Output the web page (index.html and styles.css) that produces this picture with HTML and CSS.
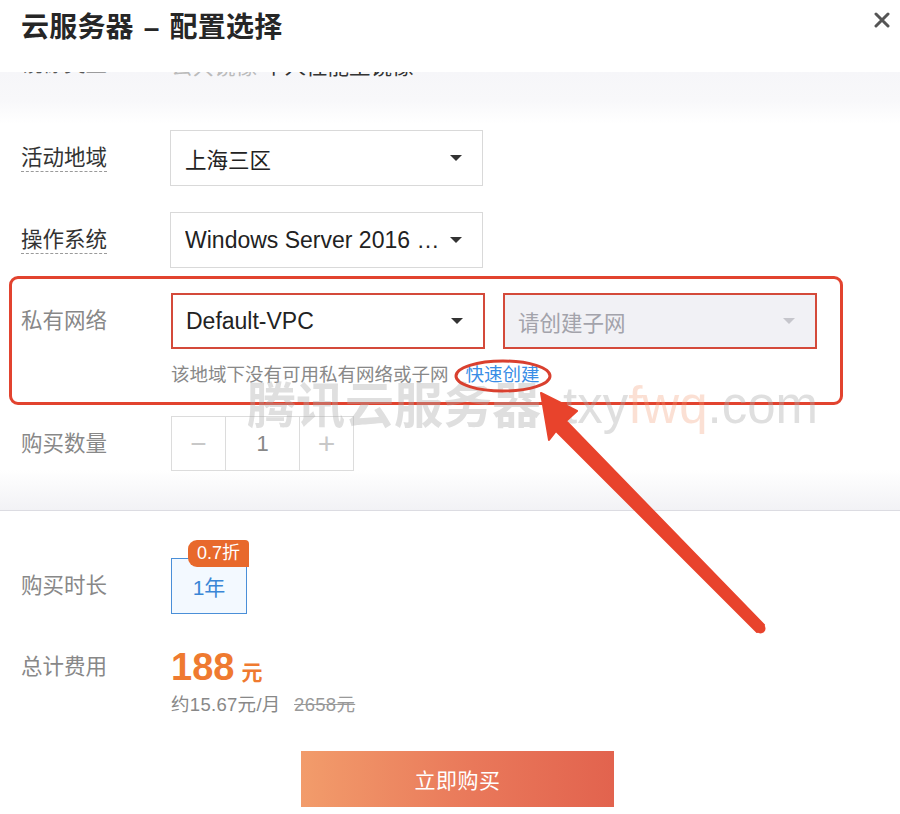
FILE: index.html
```html
<!DOCTYPE html>
<html lang="zh-CN">
<head>
<meta charset="utf-8">
<title>云服务器 - 配置选择</title>
<link rel="stylesheet" href="styles.css">
</head>
<body>
<div class="page">
  <header class="header">
    <h1 class="title">云服务器 – 配置选择</h1>
    <span class="close" aria-label="关闭">
      <svg width="16" height="16" viewBox="0 0 16 16"><path d="M2 2 L14 14 M14 2 L2 14" stroke="#555" stroke-width="3" stroke-linecap="round"/></svg>
    </span>
  </header>

  <section class="scroll">
    <div class="row cut">
      <span class="label">镜像类型</span>
      <span class="cut-value"><span class="muted">公共镜像</span> 个人性能型镜像</span>
    </div>

    <div class="row r1">
      <span class="label dashed">活动地域</span>
      <div class="select"><span class="select-text">上海三区</span><i class="caret"></i></div>
    </div>

    <div class="row r2">
      <span class="label dashed">操作系统</span>
      <div class="select"><span class="select-text latin">Windows Server 2016 …</span><i class="caret"></i></div>
    </div>

    <div class="highlight">
      <div class="row">
        <span class="label muted">私有网络</span>
        <div class="select error"><span class="select-text latin">Default-VPC</span><i class="caret"></i></div>
        <div class="select error disabled"><span class="select-text">请创建子网</span><i class="caret light"></i></div>
      </div>
      <div class="hint">该地域下没有可用私有网络或子网<a class="link">快速创建</a></div>
    </div>

    <div class="row r4">
      <span class="label muted">购买数量</span>
      <div class="stepper">
        <span class="step minus">−</span>
        <span class="step value">1</span>
        <span class="step plus">+</span>
      </div>
    </div>
  </section>

  <section class="bottom">
    <div class="row duration">
      <span class="label muted">购买时长</span>
      <div class="option">
        <span class="badge">0.7折</span>
        <span>1年</span>
      </div>
    </div>

    <div class="total">
      <span class="label muted">总计费用</span>
      <div class="price-block">
        <div class="price"><span class="num">188</span><span class="unit">元</span></div>
        <div class="sub">约15.67元/月 <del>2658元</del></div>
      </div>
    </div>

    <button class="buy">立即购买</button>
  </section>

  <div class="watermark">腾讯云服务器<span class="wm-latin">txy<span class="wm-orange">fwq</span>.com</span></div>

  <svg class="annot" width="900" height="814" viewBox="0 0 900 814">
    <ellipse cx="503" cy="376" rx="47" ry="15" fill="none" stroke="#d9402f" stroke-width="3"/>
    <polygon points="541,393 577,411 566,421 764,625 757,632 556,431 549,440" fill="#e8432c" stroke="#e8432c" stroke-width="2" stroke-linejoin="round"/>
    <circle cx="760.5" cy="628.5" r="5" fill="#e8432c"/>
  </svg>
</div>
</body>
</html>
```

FILE: styles.css
```css
* { box-sizing: border-box; }
html, body { margin: 0; padding: 0; background: #fff; }
body {
  font-family: "Liberation Sans", "Noto Sans CJK SC", sans-serif;
  color: #333;
}
.page {
  position: relative;
  width: 900px;
  height: 814px;
  overflow: hidden;
}

/* header */
.header {
  position: relative;
  z-index: 2;
  background: #fff;
  height: 72px;
  display: flex;
  align-items: flex-start;
  justify-content: space-between;
  padding: 0 10px 0 21px;
}
.title {
  margin: 10px 0 0;
  font-size: 28px;
  line-height: 36px;
  font-weight: 600;
  color: #262626;
  letter-spacing: 0.2px;
  word-spacing: 2px;
}
.close {
  margin-top: 12px;
  width: 16px;
  height: 16px;
  display: flex;
}

/* scrollable section */
.scroll {
  position: relative;
  z-index: 1;
  display: flow-root;
  height: 439px;
  overflow: hidden;
  padding-left: 21px;
  border-bottom: 1px solid #dcdce2;
  background: linear-gradient(to bottom, #f6f6f9 0, #f8f8fa 28px, #fff 52px, #fff calc(100% - 40px), #f2f2f5 100%);
}
.row {
  display: flex;
  align-items: center;
  height: 56px;
}
.label {
  width: 150px;
  flex: none;
  font-size: 21.5px;
  line-height: 26px;
  color: #333;
}
.label.muted { color: #888; }
.label.dashed {
  flex: none;
  width: auto;
  margin-right: 63px;
  border-bottom: 1px dashed #9a9a9a;
}

.cut {
  height: 30px;
  margin-top: -23px;
}
.cut-value {
  font-size: 21.5px;
  color: #333;
}
.muted { color: #bbb; }
.cut .label { color: #555; }

.r1 { margin-top: 51px; }
.r2 { margin-top: 26px; }

.select {
  position: relative;
  width: 313px;
  height: 56px;
  border: 1px solid #d9d9d9;
  background: #fff;
  display: flex;
  align-items: center;
  padding: 0 20px 0 14px;
}
.select-text {
  flex: 1;
  font-size: 21.5px;
  color: #222;
  white-space: nowrap;
  overflow: hidden;
}
.select-text.latin { font-size: 23px; }
.caret {
  width: 0;
  height: 0;
  border-left: 6px solid transparent;
  border-right: 6px solid transparent;
  border-top: 6px solid #333;
  flex: none;
}
.caret.light { border-top-color: #c6c6cc; }
.select.error {
  border: 2px solid #d44a3a;
  width: 314px;
  padding-left: 13px;
}
.select.disabled {
  margin-left: 18px;
  background: #f1f1f5;
}
.select.disabled .select-text { color: #a3a3ab; }

/* red highlight */
.highlight {
  margin: 8px 0 0 -12px;
  width: 834px;
  height: 129px;
  border: 3px solid #e2432f;
  border-radius: 9px;
  padding: 14px 0 0 9px;
}
.hint {
  margin: 13px 0 0 150px;
  font-size: 18.5px;
  line-height: 26px;
  color: #888;
}
.link {
  color: #3a8ee6;
  margin-left: 17px;
}

/* quantity */
.r4 { margin-top: 11px; height: 55px; }
.stepper {
  display: flex;
  height: 55px;
  border: 1px solid #dcdcdc;
}
.step {
  display: flex;
  align-items: center;
  justify-content: center;
  height: 100%;
  font-size: 22px;
}
.minus { width: 54px; color: #c8c8c8; font-size: 28px; border-right: 1px solid #dcdcdc; }
.value { width: 74px; color: #888; border-right: 1px solid #dcdcdc; }
.plus { width: 53px; color: #c8c8c8; font-size: 30px; }

/* bottom */
.bottom {
  padding-left: 21px;
}
.duration { margin-top: 47px; }
.option {
  position: relative;
  width: 76px;
  height: 56px;
  border: 1px solid #4a8fd8;
  background: #f3f9ff;
  display: flex;
  align-items: center;
  justify-content: center;
  font-size: 21px;
  color: #3a86d6;
}
.badge {
  position: absolute;
  left: 16px;
  top: -19px;
  width: 61px;
  height: 27px;
  background: #e8692c;
  color: #fff;
  font-size: 18px;
  line-height: 27px;
  text-align: center;
  border-radius: 9px 4px 0 9px;
}
.total {
  display: flex;
  align-items: flex-start;
  margin-top: 33px;
}
.total .label { line-height: 40px; }
.price {
  height: 40px;
  display: flex;
  align-items: baseline;
  color: #ef7a30;
  font-weight: 700;
}
.price .num { font-size: 38px; line-height: 40px; }
.price .unit { font-size: 21px; margin-left: 7px; }
.sub {
  margin-top: 6px;
  font-size: 18.5px;
  line-height: 24px;
  color: #888;
  letter-spacing: 0.3px;
}
.sub del { margin-left: 8px; color: #999; }

.buy {
  display: block;
  margin: 34px 0 0 280px;
  width: 313px;
  height: 56px;
  border: none;
  background: linear-gradient(to right, #f29c6b, #e9785a 55%, #e2634e);
  color: #fff;
  font-family: "Liberation Sans", "Noto Sans CJK SC", sans-serif;
  font-size: 21px;
  letter-spacing: 0.5px;
}

/* overlays */
.watermark {
  position: absolute;
  z-index: 3;
  left: 247px;
  top: 378px;
  font-size: 49px;
  line-height: 56px;
  font-weight: 700;
  color: rgba(170, 170, 170, 0.38);
  white-space: nowrap;
  pointer-events: none;
}
.wm-latin {
  font-weight: 400;
  font-size: 51px;
  margin-left: 22px;
}
.wm-orange { color: rgba(242, 160, 120, 0.32); }
.annot {
  position: absolute;
  z-index: 4;
  left: 0;
  top: 0;
  pointer-events: none;
}
```
